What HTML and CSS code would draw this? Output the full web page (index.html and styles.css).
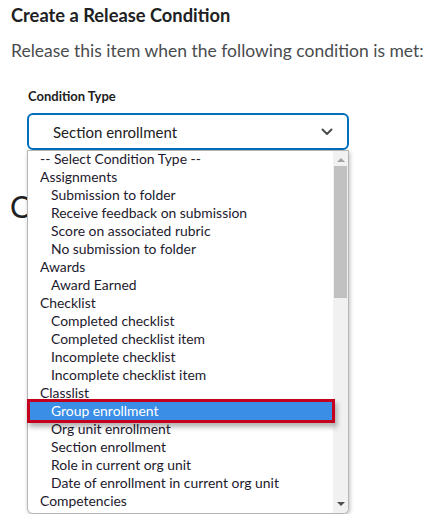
FILE: index.html
```html
<!DOCTYPE html>
<html>
<head>
<meta charset="utf-8">
<link rel="stylesheet" href="styles.css">
</head>
<body>
<div class="page">
  <h1 class="title">Create a Release Condition</h1>
  <p class="intro">Release this item when the following condition is met:</p>
  <div class="field">
    <div class="label">Condition Type</div>
    <div class="select">
      <span class="select-value">Section enrollment</span>
      <svg class="chevron" width="12" height="8" viewBox="0 0 12 8"><path d="M1.5 1.5 L6 6 L10.5 1.5" fill="none" stroke="#494c4e" stroke-width="2" stroke-linecap="round" stroke-linejoin="round"/></svg>
    </div>
    <div class="popup">
      <div class="options">
        <div class="row top">-- Select Condition Type --</div>
        <div class="row grp">Assignments</div>
        <div class="row opt">Submission to folder</div>
        <div class="row opt">Receive feedback on submission</div>
        <div class="row opt">Score on associated rubric</div>
        <div class="row opt">No submission to folder</div>
        <div class="row grp">Awards</div>
        <div class="row opt">Award Earned</div>
        <div class="row grp">Checklist</div>
        <div class="row opt">Completed checklist</div>
        <div class="row opt">Completed checklist item</div>
        <div class="row opt">Incomplete checklist</div>
        <div class="row opt">Incomplete checklist item</div>
        <div class="row grp">Classlist</div>
        <div class="row opt chosen">Group enrollment</div>
        <div class="row opt">Org unit enrollment</div>
        <div class="row opt">Section enrollment</div>
        <div class="row opt">Role in current org unit</div>
        <div class="row opt">Date of enrollment in current org unit</div>
        <div class="row grp">Competencies</div>
      </div>
      <div class="track">
        <span class="arrow up"></span>
        <div class="thumb"></div>
        <span class="arrow down"></span>
      </div>
    </div>
  </div>
  <div class="behind">Conditions</div>
</div>
</body>
</html>
```
FILE: styles.css
```css
* { box-sizing: border-box; }
html, body { margin: 0; padding: 0; background: #fff; }
body { font-family: Lato, "Open Sans", sans-serif; color: #202122; }
.page { padding: 4px 11px 0 11px; position: relative; }
.title { margin: 0; font-size: 18.3px; font-weight: 700; line-height: 22px; color: #202122; }
.intro { margin: 14px 0 0 0; font-size: 17.5px; line-height: 22px; color: #494c4e; white-space: nowrap; }
.field { margin: 25px 0 0 16px; width: 322px; position: relative; z-index: 2; }
.label { font-size: 13px; font-weight: 700; line-height: 18px; color: #202122; padding-left: 1px; }
.select {
  margin-top: 8px;
  height: 37px; border: 2px solid #006fbf; border-radius: 6px;
  display: flex; align-items: center; justify-content: space-between;
  padding: 0 14px 0 24px; background: #fff;
}
.select-value { font-size: 15px; color: #202122; }
.popup {
  margin-top: 0; width: 322px; height: 364px;
  background: #fff; border: 1px solid #b5b5b5;
  border-radius: 0 0 6px 6px; box-shadow: 1px 2px 4px rgba(0,0,0,0.25);
  display: flex;
}
.options { flex: 1; font-size: 13.9px; color: #1d1a2e; margin-top: -1px; }
.row { height: 18px; line-height: 18px; white-space: nowrap; }
.top, .grp { padding-left: 12px; }
.opt { padding-left: 23px; }
.chosen {
  background: #3a8ee6; color: #fff; position: relative;
  box-shadow: 0 0 0 3px #c4001d, 2px 4px 5px 3px rgba(0,0,0,0.3);
  margin: 0 1px 0 2px; padding-left: 21px;
}
.track { width: 15px; background: #f1f1f1; display: flex; flex-direction: column; align-items: center; border-radius: 0 0 5px 0; }
.thumb { width: 13px; height: 132px; background: #c1c1c1; margin-top: 4px; }
.arrow { width: 0; height: 0; border-left: 4px solid transparent; border-right: 4px solid transparent; }
.arrow.up { border-bottom: 4px solid #a3a3a3; margin-top: 7px; }
.arrow.down { border-top: 4px solid #505050; margin-top: auto; margin-bottom: 7px; }
.behind { position: absolute; left: 10px; top: 188px; font-size: 30px; font-weight: 400; color: #202122; z-index: 1; }
```
